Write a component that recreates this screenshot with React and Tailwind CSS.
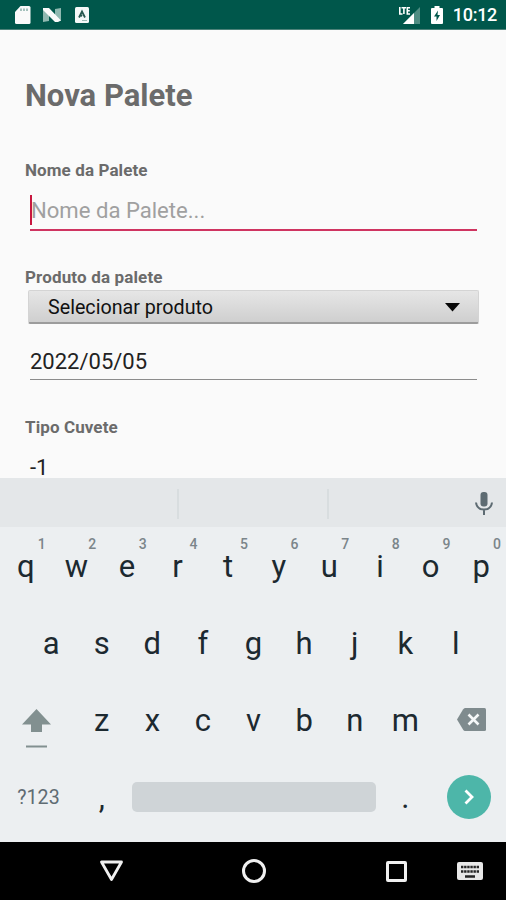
import React from 'react';

const topRow = [
  ['q', '1'], ['w', '2'], ['e', '3'], ['r', '4'], ['t', '5'],
  ['y', '6'], ['u', '7'], ['i', '8'], ['o', '9'], ['p', '0']
];
const middleRow = ['a', 's', 'd', 'f', 'g', 'h', 'j', 'k', 'l'];
const bottomRow = ['z', 'x', 'c', 'v', 'b', 'n', 'm'];

const StatusBar = () => (
  <header className="flex h-[30px] shrink-0 items-center justify-between border-b border-[#4d8279] bg-[#00574b] pl-[14px] pr-[9px] text-white">
    <div className="flex items-center pt-px">
      {/* SD card */}
      <svg width="18" height="20" viewBox="0 0 18 20">
        <path d="M6.500 1H15a1.500 1.500 0 0 1 1.500 1.500v15A1.500 1.500 0 0 1 15 19H2.500A1.500 1.500 0 0 1 1 17.500V7z" fill="#fafafa" />
        <path d="M7 3.500v2.500M10 3.500v2.500M13 3.500v2.500" stroke="#7aa59d" strokeWidth="1.300" />
      </svg>
      {/* Android N */}
      <svg width="20" height="16" viewBox="0 0 20 16" className="ml-[10px]">
        <path d="M1 2l6 3v9l-6 1zM19 1l-6 1v9l6 3z" fill="#8fb8b0" />
        <path d="M1 1h6l12 12.500L16 15h-3L1 3z" fill="#fafafa" />
      </svg>
      <svg width="14" height="16" viewBox="0 0 14 16" className="ml-[13px]">
        <rect width="14" height="16" rx="1.500" fill="#f5f9f8" />
        <path d="M4 10.500L7 4.500l3 6M5.500 9.300L7 8" fill="none" stroke="#28584f" strokeWidth="1.800" />
        <path d="M7 13.500h5" stroke="#9dbbb5" strokeWidth="1" />
      </svg>
    </div>
    <div className="flex items-center pt-px">
      {/* Señal LTE */}
      <svg width="23" height="19" viewBox="0 0 23 19">
        <path d="M22 1v17H5z" fill="#4f8d83" />
        <path d="M16 7v11H5z" fill="#fff" />
        <path d="M1.800 1v7h2.700M3.500 1.800h4.500M5.900 1.800v6.200M12 1.800H9.300v6.200H12M9.300 4.800h2.500" fill="none" stroke="#fff" strokeWidth="1.600" />
      </svg>
      <svg width="12" height="18" viewBox="0 0 12 18" className="ml-[10px]">
        <path d="M3.500 0h5v2H11a1 1 0 0 1 1 1v14a1 1 0 0 1-1 1H1a1 1 0 0 1-1-1V3a1 1 0 0 1 1-1h2.500z" fill="#fff" />
        <path d="M7 4.500L3 10.500h2.500V15L9 9H6.500z" fill="#00574b" />
      </svg>
      <span className="ml-[10px] text-[18px] font-medium leading-none tracking-[-0.3px]">10:12</span>
    </div>
  </header>
);

const PaleteForm = () => (
  <main className="flex h-[448px] shrink-0 flex-col overflow-hidden bg-[#fafafa] px-[25px] text-[#6b6b6b]">
    <h1 className="mt-[47px] text-[31px] font-bold leading-[38px]">Nova Palete</h1>
    <label className="mt-[45px] text-[17px] font-bold leading-5 tracking-[0.1px]">Nome da Palete</label>
    <div className="ml-[5px] mr-[4px] mt-[15px] flex h-[36px] shrink-0 items-start border-b-2 border-[#cf3460]">
      <span className="h-[30px] w-[2px] bg-[#c8173f]" />
      <span className="-ml-[1px] text-[22.100px] leading-[31px] text-[#a0a0a0]">Nome da Palete...</span>
    </div>
    <label className="mt-[36px] text-[17px] font-bold leading-5 tracking-[0.15px]">Produto da palete</label>
    <div className="ml-[3px] mr-[2px] mt-[3px] flex h-[34px] shrink-0 items-center justify-between rounded-[2px] border border-b-2 border-[#d4d4d4] border-b-[#9c9c9c] bg-linear-to-b from-[#e6e6e6] to-[#cfcfcf] pl-[19px] pr-[18px] text-[19.700px] text-[#111]">
      <span className="pt-[3px]">Selecionar produto</span>
      <svg width="15" height="9" viewBox="0 0 15 9" className="mt-[2px]">
        <path d="M0 0h15L7.500 8.500z" fill="#080808" />
      </svg>
    </div>
    <div className="ml-[5px] mr-[4px] mt-[20px] h-[36px] shrink-0 border-b border-[#8c8c8c] text-[22px] leading-[35px] text-[#222]">2022/05/05</div>
    <label className="mt-[37px] text-[17px] font-bold leading-5 tracking-[0.1px]">Tipo Cuvete</label>
    <div className="ml-[5px] mt-[21px] text-[22px] leading-5 text-[#222]">-1</div>
  </main>
);

const SuggestionStrip = () => (
  <div className="flex h-[49px] shrink-0 items-center bg-[#e4e7e9]">
    <span className="mt-[3px] h-[30px] w-[179px] border-r-2 border-[#d8dddf]" />
    <span className="mt-[3px] h-[30px] w-[150px] border-r-2 border-[#d8dddf]" />
    <svg width="18" height="25" viewBox="0 0 18 25" className="ml-auto mr-[13px] mt-px">
      <rect x="5.500" y="1" width="7" height="14.500" rx="3" fill="#5d6b72" />
      <path d="M1 11.500c.5 4.500 3.500 7 8 7s7.500-2.500 8-7M9 18v6" fill="none" stroke="#5d6b72" strokeWidth="2" />
    </svg>
  </div>
);

const Key = ({ children, hint }) => (
  <div className="relative flex h-[77px] w-[50.600px] shrink-0 items-center justify-center pl-px pt-[2px] text-[31px] leading-none text-[#1c2930]">
    {children}
    {hint && <span className="absolute right-[5px] top-[10px] text-[14px] font-medium leading-none text-[#7b858a]">{hint}</span>}
  </div>
);

const Keyboard = () => (
  <section className="h-[315px] shrink-0 bg-[#eceff1]">
    <div className="flex">
      {topRow.map(([letter, hint]) => <Key key={letter} hint={hint}>{letter}</Key>)}
    </div>
    <div className="flex justify-center">
      {middleRow.map((letter) => <Key key={letter}>{letter}</Key>)}
    </div>
    <div className="flex">
      <div className="flex w-[76px] flex-col items-center pr-[4px] pt-[28px]">
        <svg width="29" height="39" viewBox="0 0 29 39">
          <path d="M14.500 0L29 15.500h-9v7.500h-11v-7.500H0z" fill="#829090" />
          <path d="M4 37.500h21" stroke="#829090" strokeWidth="2" />
        </svg>
      </div>
      {bottomRow.map((letter) => <Key key={letter}>{letter}</Key>)}
      <div className="flex flex-1 items-start pl-[27px] pt-[27px]">
        <svg width="29" height="23" viewBox="0 0 29 23">
          <path d="M8 0h19.500A1.500 1.500 0 0 1 29 1.500v20a1.500 1.500 0 0 1-1.500 1.500H8q-1 0-2-1.500L0 11.500l6-10Q7 0 8 0z" fill="#7f8b8e" />
          <path d="M11.500 6.500l10 10M21.500 6.500l-10 10" stroke="#f5f7f8" strokeWidth="2.600" />
        </svg>
      </div>
    </div>
    <div className="flex h-[78px] items-center text-[#1c2930]">
      <span className="w-[76px] pl-px pt-[2px] text-center text-[19.600px] text-[#5f6c73]">?123</span>
      <span className="w-[50.600px] pl-px text-center text-[31px] leading-none">,</span>
      <span className="ml-[5px] h-[30px] w-[244px] rounded-[5px] bg-[#cfd4d7]" />
      <span className="ml-[4px] w-[50.600px] pl-px text-center text-[31px] leading-none">.</span>
      <button className="ml-auto mr-[15px] flex size-[44px] items-center justify-center rounded-full bg-[#4db6a9]">
        <svg width="10" height="16" viewBox="0 0 10 16">
          <path d="M1.500 1.500L8 8l-6.500 6.500" fill="none" stroke="#fff" strokeWidth="2.800" />
        </svg>
      </button>
    </div>
  </section>
);

const NavigationBar = () => (
  <nav className="flex h-[58px] shrink-0 items-center bg-black">
    <svg width="25" height="22" viewBox="0 0 25 22" className="ml-[99px]">
      <path d="M2.500 2h20l-10 17.500z" fill="none" stroke="#f0f0f0" strokeWidth="2.800" strokeLinejoin="round" />
    </svg>
    <span className="ml-[118px] size-[24px] rounded-full border-[3px] border-[#f0f0f0]" />
    <span className="ml-[120px] size-[21px] rounded-[2px] border-[3px] border-[#f0f0f0]" />
    <svg width="26" height="18" viewBox="0 0 26 18" className="ml-[50px]">
      <rect width="26" height="18" rx="2" fill="#e8e8e8" />
      <path d="M4 5h18M4 9.500h18" stroke="#252525" strokeWidth="2.500" strokeDasharray="2.400 0.720" />
      <path d="M8 14.500h10" stroke="#252525" strokeWidth="2.500" />
    </svg>
  </nav>
);

const App = () => (
  <div className="flex h-[900px] w-[506px] flex-col overflow-hidden bg-[#fafafa] font-['Roboto',sans-serif]">
    <StatusBar />
    <PaleteForm />
    <SuggestionStrip />
    <Keyboard />
    <NavigationBar />
  </div>
);

export default App;
